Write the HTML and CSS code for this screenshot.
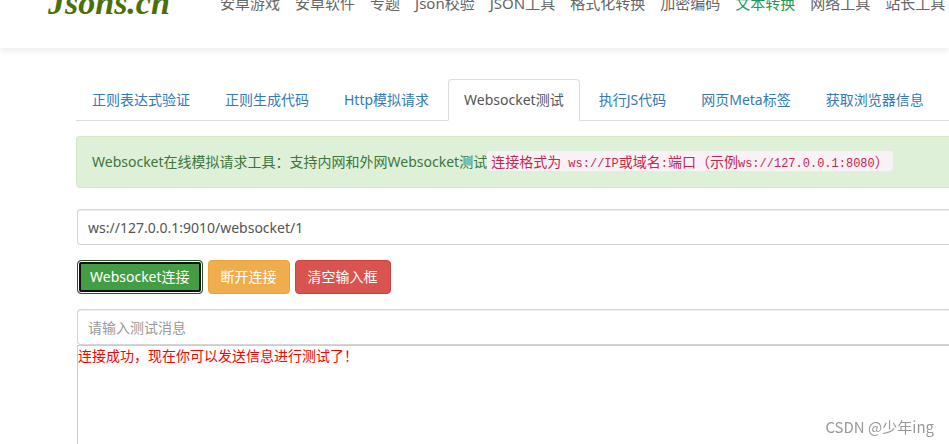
FILE: index.html
```
<!DOCTYPE html>
<html lang="zh-CN">

<head>
    <meta charset="UTF-8">
    <meta name="viewport" content="width=device-width, initial-scale=1.0">
    <title>Websocket测试</title>
    <link rel="stylesheet" href="styles.css">
</head>

<body>
    <header class="header">
        <a class="logo" href="#">Jsons.cn</a>
        <nav class="main-nav">
            <a href="#">安卓游戏</a>
            <a href="#">安卓软件</a>
            <a href="#">专题</a>
            <a href="#">Json校验</a>
            <a href="#">JSON工具</a>
            <a href="#">格式化转换</a>
            <a href="#">加密编码</a>
            <a href="#" class="current">文本转换</a>
            <a href="#">网络工具</a>
            <a href="#">站长工具</a>
        </nav>
    </header>

    <main class="content">
        <ul class="tabs">
            <li><a href="#">正则表达式验证</a></li>
            <li><a href="#">正则生成代码</a></li>
            <li><a href="#">Http模拟请求</a></li>
            <li class="active"><a href="#">Websocket测试</a></li>
            <li><a href="#">执行JS代码</a></li>
            <li><a href="#">网页Meta标签</a></li>
            <li><a href="#">获取浏览器信息</a></li>
        </ul>

        <div class="alert">Websocket在线模拟请求工具：支持内网和外网Websocket测试<code>连接格式为<span class="mono"> ws://IP</span>或域名<span class="mono">:</span>端口（示例<span class="mono">ws://127.0.0.1:8080</span>）</code></div>

        <input type="text" id="url" class="form-control" aria-label="Websocket地址" value="ws://127.0.0.1:9010/websocket/1">

        <div class="buttons">
            <button type="button" class="btn btn-success">Websocket连接</button>
            <button type="button" class="btn btn-warning">断开连接</button>
            <button type="button" class="btn btn-danger">清空输入框</button>
        </div>

        <input type="text" id="message" class="form-control" aria-label="测试消息" placeholder="请输入测试消息">
        <div class="output">连接成功，现在你可以发送信息进行测试了！</div>
    </main>

    <div class="watermark">CSDN @少年ing</div>
</body>

</html>
```
FILE: styles.css
```
* {
    box-sizing: border-box;
}

body {
    display: flex;
    flex-direction: column;
    height: 100vh;
    margin: 0;
    overflow: hidden;
    font-family: "Noto Sans", "Noto Sans CJK SC", sans-serif;
    font-size: 14px;
    line-height: 20px;
    color: #333;
    background-color: #fff;
}

a {
    color: #337ab7;
    text-decoration: none;
}

/* header is scrolled partly out of view */
.header {
    display: flex;
    flex: none;
    align-items: center;
    gap: 50px;
    height: 90px;
    margin-top: -42px;
    padding-left: 48px;
    box-shadow: 0 3px 6px rgba(0, 0, 0, 0.08);
}

.logo {
    width: 122px;
    font-family: "Liberation Serif", serif;
    font-size: 34px;
    font-style: italic;
    font-weight: 700;
    line-height: 40px;
    color: #4b6f0a;
}

.main-nav {
    display: flex;
    gap: 15px;
    font-size: 15px;
    white-space: nowrap;
}

.main-nav a {
    color: #666;
}

.main-nav .current {
    color: #229954;
}

.content {
    display: flex;
    flex: 1;
    flex-direction: column;
    padding: 31px 0 0 76px;
}

.tabs {
    display: flex;
    gap: 3px;
    margin: 0 0 15px;
    padding: 0;
    list-style: none;
    white-space: nowrap;
    border-bottom: 1px solid #ddd;
}

.tabs li {
    margin-bottom: -1px;
}

.tabs a {
    display: block;
    padding: 10px 15px;
    border: 1px solid transparent;
    border-radius: 4px 4px 0 0;
}

.tabs .active a {
    color: #555;
    background-color: #fff;
    border-color: #ddd #ddd #fff;
}

.alert {
    margin-bottom: 21px;
    padding: 15px;
    white-space: nowrap;
    color: #3c763d;
    background-color: #dff0d8;
    border: 1px solid #d6e9c6;
    border-right: 0;
    border-radius: 4px 0 0 4px;
}

code {
    padding: 0 4px;
    font-family: "Noto Sans CJK SC", sans-serif;
    font-size: 14px;
    line-height: 1;
    color: #c7254e;
    background-color: #f9f2f4;
    border-radius: 4px;
}

.mono {
    font-family: "Liberation Mono", monospace;
    font-size: 12px;
    white-space: pre;
}

.form-control {
    height: 36px;
    margin-left: 1px;
    padding: 6px 10px;
    font-family: inherit;
    font-size: 14px;
    color: #555;
    background-color: #fff;
    border: 1px solid #d5d5d5;
    border-right: 0;
    border-radius: 4px 0 0 4px;
    box-shadow: inset 0 1px 1px rgba(0, 0, 0, 0.075);
}

.form-control::placeholder {
    color: #999;
}

.buttons {
    display: flex;
    gap: 5px;
    margin: 15px 0 15px 1px;
}

.btn {
    height: 34px;
    padding: 6px 12px;
    font-family: inherit;
    font-size: 14px;
    line-height: 20px;
    color: #fff;
    border: 1px solid transparent;
    border-radius: 4px;
    cursor: pointer;
}

.btn-success {
    background-color: #449d44;
    border-color: #255625;
    box-shadow: inset 0 0 0 1px #fff, inset 0 0 0 3px #101010;
}

.btn-warning {
    background-color: #f0ad4e;
    border-color: #eea236;
}

.btn-danger {
    background-color: #d9534f;
    border-color: #d43f3a;
}

.output {
    flex: 1;
    margin-left: 1px;
    color: #f00;
    border: solid #ccc;
    border-width: 1px 0 0 1px;
}

.watermark {
    position: fixed;
    right: 15px;
    bottom: 7px;
    font-family: "Noto Sans CJK SC", sans-serif;
    font-size: 15px;
    color: #999;
}
```
